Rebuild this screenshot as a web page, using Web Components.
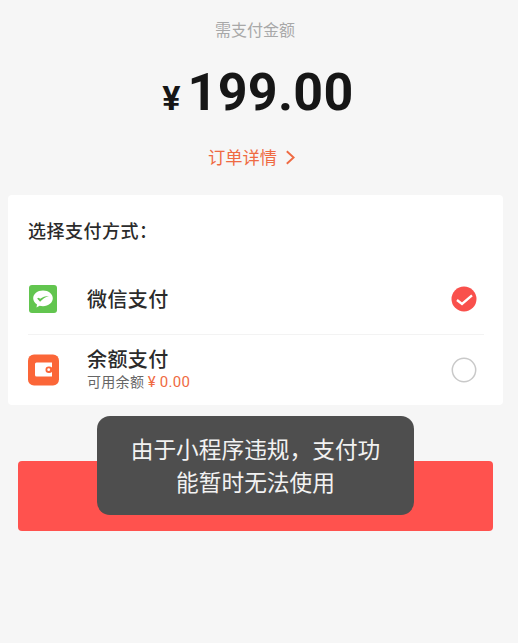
<!DOCTYPE html>
<html lang="zh">
<head>
<meta charset="utf-8">
<style>
html,body{margin:0;padding:0;height:100%;background:#f6f6f6;overflow:hidden}
body{font-family:"Noto Sans CJK SC","Noto Sans",sans-serif}
</style>
</head>
<body>
<pay-page>
  <pay-amount slot="head" label="需支付金额" value="199.00" link="订单详情"></pay-amount>
  <pay-card title="选择支付方式：">
    <pay-option name="微信支付" icon="wechat" checked></pay-option>
    <pay-option name="余额支付" icon="wallet" sub="可用余额" subval="¥ 0.00" divided></pay-option>
  </pay-card>
  <pay-button></pay-button>
  <pay-toast>由于小程序违规，支付功能暂时无法使用</pay-toast>
</pay-page>
<script>
function def(name, css, html){
  customElements.define(name, class extends HTMLElement{
    connectedCallback(){
      if(this.shadowRoot) return;
      const r=this.attachShadow({mode:'open'});
      const a=k=>this.getAttribute(k)||'';
      r.innerHTML='<style>'+css+'</style>'+(typeof html==='function'?html(a,this):html);
    }
  });
}
def('pay-page',`:host{display:block;position:relative;height:643px;box-sizing:border-box}
`,`<slot name="head"></slot><slot></slot>`);
def('pay-amount',`:host{display:flex;flex-direction:column;align-items:center;height:195px;padding-right:8px;box-sizing:border-box}
.l{margin-top:18px;font-size:16px;line-height:22px;color:#a8a8a8}
.v{margin:20px 0 0 6px;height:66px;display:flex;align-items:baseline;color:#161616;font-family:Roboto,"Noto Sans",sans-serif;font-weight:700}
.y{font-size:34px;margin-right:7px;line-height:66px}
.n{font-size:52px;line-height:66px;letter-spacing:.3px}
.d{margin:19px 6px 0 0;display:flex;align-items:center;gap:8px;font-size:17.250px;line-height:24px;color:#ef6a42}
svg{display:block;margin-top:1px}`,
a=>`<div class="l">${a('label')}</div><div class="v"><span class="y">¥</span><span class="n">${a('value')}</span></div>
<div class="d"><span>${a('link')}</span><svg width="11" height="15" viewBox="0 0 11 15"><path d="M1.800 1.200 8.600 7.500 1.800 13.800" fill="none" stroke="#ef6a42" stroke-width="1.900"/></svg></div>`);
def('pay-card',`:host{display:block;margin:0 15px 0 8px;height:210px;background:#fff;border-radius:4px;box-sizing:border-box;padding:0 19px 0 20px}
.t{padding-top:23px;height:68px;box-sizing:border-box;font-size:18px;line-height:24px;font-weight:500;color:#2b2b2b;letter-spacing:.5px}`,
a=>`<div class="t">${a('title')}</div><slot></slot>`);
const icons={
wechat:`<svg width="30" height="30" viewBox="0 0 30 30"><rect x="1" y="1" width="28" height="28" rx="3" fill="#62c54f"/><path d="M15 6.500c-5.600 0-9.800 3.500-9.800 7.800 0 2.600 1.500 4.700 3.800 6.100l-.5 3.100 3.100-1.800c1 .3 2.200.5 3.400.5 5.600 0 9.800-3.500 9.800-7.900S20.600 6.500 15 6.500z" fill="#fff"/><path d="M9.100 14.500l3 3.300c2.300-2.800 5-4.500 8.800-5.800-3.800.1-6.400 1.200-8.700 2.800l-1.600-1.100z" fill="#62c54f"/></svg>`,
wallet:`<svg width="31" height="32" viewBox="0 0 31 32"><rect x="0" y="0.500" width="31" height="31" rx="6" fill="#fb6638"/><path d="M7 10a1.500 1.500 0 0 1 1.500-1.500H24v14H8.500A1.500 1.500 0 0 1 7 21z" fill="#fff"/><rect x="17.500" y="12.500" width="7" height="6.500" rx="3.200" fill="#fb6638"/><circle cx="20.700" cy="15.700" r="1.400" fill="#fff"/></svg>`};
def('pay-option',`:host{display:flex;align-items:center;height:71px;position:relative;box-sizing:border-box;color:#2b2b2b}
:host([divided]){border-top:1px solid #f3f3f3}
.i{width:59px;flex:none;display:flex;align-items:center;margin-top:1px}
:host([divided]) .i{margin-top:0}
.m{flex:1;display:flex;flex-direction:column}
:host([divided]) .m{margin-top:-3px}
.n{font-size:20px;line-height:25px;font-weight:500;letter-spacing:.4px}
.s{font-size:14px;line-height:17px;margin-top:2px;color:#666;letter-spacing:.3px}
.s b{font-weight:400;color:#ef6a42;font-family:Roboto,"Noto Sans",sans-serif;font-size:15px}
.c{width:26px;height:26px;flex:none;margin:1px 7px 0 0}
:host([divided]) .c{margin-top:0}`,
(a,el)=>`<div class="i">${icons[a('icon')]}</div><div class="m"><div class="n">${a('name')}</div>${a('sub')?`<div class="s">${a('sub')} <b>${a('subval')}</b></div>`:''}</div>
<svg class="c" viewBox="0 0 26 26">${el.hasAttribute('checked')?`<circle cx="13" cy="13" r="12.500" fill="#f9504c"/><path d="M6 14l5 4 10-8.700" fill="none" stroke="#fff" stroke-width="2.400"/>`:`<circle cx="13" cy="13" r="11.700" fill="#fff" stroke="#c9c9c9" stroke-width="1.500"/>`}</svg>`);
def('pay-button',`:host{display:block;margin:56px 25px 0 18px;height:70px;background:#ff524e;border-radius:4px}`,``);
def('pay-toast',`:host{position:absolute;left:97px;top:416px;width:317px;height:99px;box-sizing:border-box;padding:16px 30px 0;background:#4e4e4e;border-radius:13px;color:#f2f2f2;font-size:22.700px;line-height:33px;text-align:center}`,`<slot></slot>`);
</script>
</body>
</html>
